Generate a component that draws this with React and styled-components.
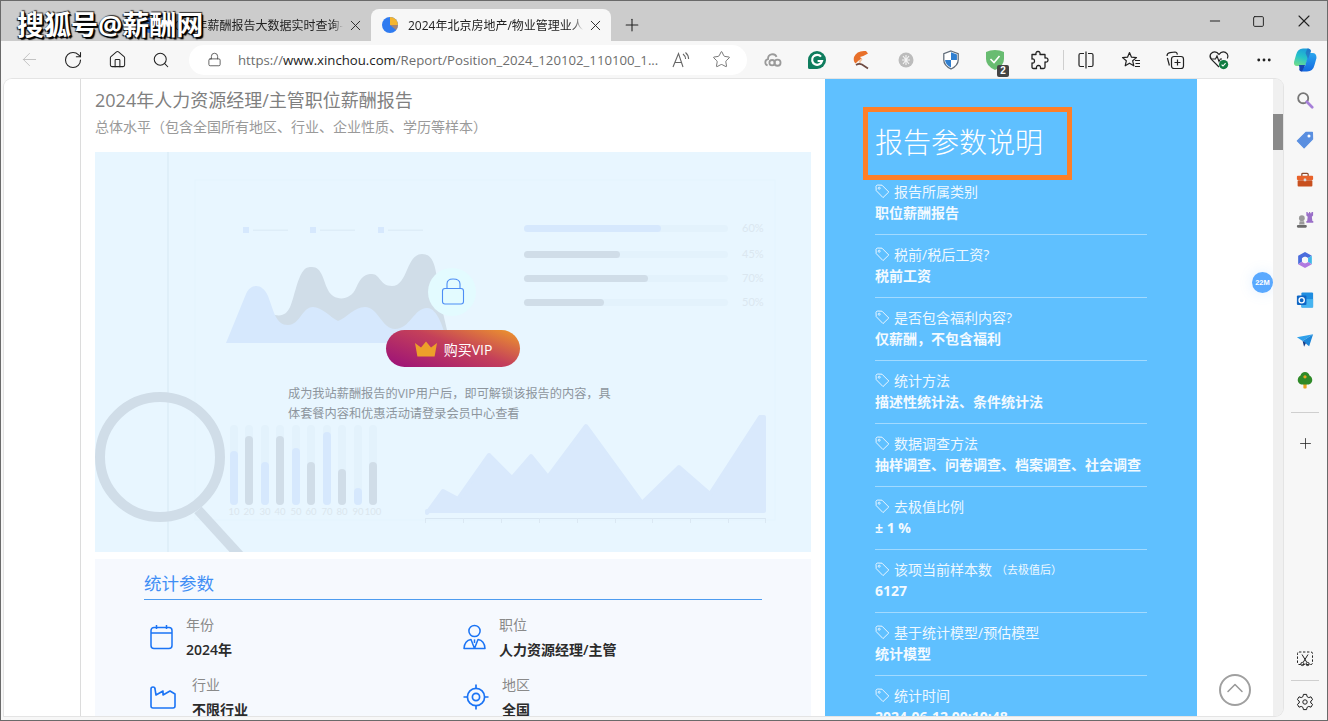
import React from "react";
import styled, { createGlobalStyle } from "styled-components";
import {
  ArrowLeft,
  RotateCw,
  Home,
  Search,
  Lock,
  Star,
  Plus,
  X,
  Minus,
  Square,
  MoreHorizontal,
  ChevronUp,
} from "lucide-react";

const CJK = `"Open Sans", "Noto Sans CJK SC", sans-serif`;

const GlobalStyle = createGlobalStyle`
  html, body {
    margin: 0;
    padding: 0;
    height: 100%;
    overflow: hidden;
    background: #f7f7f7;
    font-family: ${CJK};
  }
`;

const TagIcon = () => (
  <svg width="15" height="15" viewBox="0 0 15 15" fill="none" stroke="#e8f5ff" strokeWidth="1">
    <path d="M1 2.2 L1.2 6.6 L8 13.6 L13.8 8 L7 1.2 L2.2 1 Z" strokeLinejoin="round" />
    <circle cx="4.2" cy="4.2" r="1" />
  </svg>
);

const PieFavicon = () => (
  <svg width="16" height="16" viewBox="0 0 16 16">
    <circle cx="8" cy="8" r="8" fill="#2f7bf0" />
    <path d="M8 0 A8 8 0 0 1 16 8 L8 8 Z" fill="#f5b52e" />
    <path d="M8 8 L16 8 A8 8 0 0 1 14 13 Z" fill="#f08a24" opacity="0.6" />
  </svg>
);

const ReadAloudIcon = () => (
  <svg width="20" height="20" viewBox="0 0 20 20" fill="none" stroke="#666" strokeWidth="1.1">
    <path d="M2 17 L7.500 3.500 L12 17 M4 12.500 H10.500" />
    <path d="M12 4 Q14.500 6 14.600 9 M14.500 2.500 Q17.500 5 17.600 9" />
  </svg>
);

const CloudExt = () => (
  <svg width="18" height="18" viewBox="0 0 20 20" fill="none" stroke="#9a9a9a" strokeWidth="2">
    <path d="M4 16 A3.600 3.600 0 0 1 4.500 9 A5 5 0 0 1 14 6.500" />
    <circle cx="9" cy="13" r="3" />
    <circle cx="15" cy="13" r="3.400" />
  </svg>
);

const GrammarlyExt = () => (
  <svg width="20" height="20" viewBox="0 0 20 20">
    <path d="M10 1 A9 9 0 1 1 10 19 L2.500 19 Q1 19 1 17.500 L1 10 A9 9 0 0 1 10 1 Z" fill="#0f7d5e" />
    <path d="M14 6.600 A5 5 0 1 0 15 11 H10.600" fill="none" stroke="#fff" strokeWidth="2.200" />
  </svg>
);

const FoxExt = () => (
  <svg width="20" height="20" viewBox="0 0 20 20">
    <path d="M14 1 Q5 0 2 7 Q1 11 3.500 13.500 Q6 10 10 9 L8 7 Q12 6 16 3.500 Z" fill="#e8702a" />
    <path d="M10 9 Q7 11 8 13" fill="none" stroke="#f2c7a6" strokeWidth="2" />
    <path d="M4 15 Q7 13 10 14.500 L16 18.500" fill="none" stroke="#6d4a42" strokeWidth="1.700" />
  </svg>
);

const BugExt = () => (
  <svg width="20" height="20" viewBox="0 0 20 20">
    <circle cx="10" cy="10" r="7.500" fill="#bcbcbc" />
    <path d="M7 6 L13 14 M13 6 L7 14 M10 5 V15 M6 10 H14" stroke="#f4f4f4" strokeWidth="1.100" />
  </svg>
);

const ShieldExt = () => (
  <svg width="18" height="20" viewBox="0 0 20 22">
    <path d="M10 1 L18 4 V11 Q18 17 10 21 Q2 17 2 11 V4 Z" fill="#fff" stroke="#5f6b78" strokeWidth="1.400" />
    <path d="M10 2.500 L16.600 5 V11 H10 Z" fill="#2f7fd0" />
    <path d="M10 11 V19.400 Q3.600 16 3.400 11 Z" fill="#2f7fd0" />
  </svg>
);

const AdguardExt = () => (
  <svg width="20" height="22" viewBox="0 0 20 22">
    <path d="M10 1 Q15 1 19 3 V10 Q19 17 10 21 Q1 17 1 10 V3 Q5 1 10 1 Z" fill="#68bc71" />
    <path d="M5.500 10 L9 13.500 L14.500 7" fill="none" stroke="#fff" strokeWidth="1.600" />
  </svg>
);

const PuzzleIcon = () => (
  <svg width="20" height="20" viewBox="0 0 20 20" fill="none" stroke="#222" strokeWidth="1.300">
    <path
      d="M7 4.500 Q6.500 1.500 9 1.500 Q11.500 1.500 11 4.500 H16 V8 Q19 7.500 19 10 Q19 12.500 16 12 V17 Q16 18.500 14.500 18.500 H11.500 Q12 15.500 9.500 15.500 Q7 15.500 7.500 18.500 H4.500 Q3 18.500 3 17 V13 Q5.500 13.500 5.500 11 Q5.500 8.500 3 9 V4.500 Z"
      strokeLinejoin="round"
    />
  </svg>
);

const SplitIcon = () => (
  <svg width="20" height="20" viewBox="0 0 20 20" fill="none" stroke="#222" strokeWidth="1.200">
    <path d="M8 3.500 H4.500 Q3 3.500 3 5 V15 Q3 16.500 4.500 16.500 H8 M12 3.500 H15.500 Q17 3.500 17 5 V15 Q17 16.500 15.500 16.500 H12 M10 1.500 V18.500" />
  </svg>
);

const FavListIcon = () => (
  <svg width="20" height="20" viewBox="0 0 20 20" fill="none" stroke="#222" strokeWidth="1.200">
    <path d="M8.500 2.500 L10.500 7.200 L15.500 7.600 L11.700 10.800 L12.800 15.800 L8.500 13.200 L4.200 15.800 L5.300 10.800 L1.500 7.600 L6.500 7.200 Z" strokeLinejoin="round" />
    <path d="M14 10.500 H19 M14.500 13.500 H19 M14 16.500 H19" />
  </svg>
);

const CollectionsIcon = () => (
  <svg width="20" height="20" viewBox="0 0 20 20" fill="none" stroke="#222" strokeWidth="1.200">
    <path d="M2 6 Q2 3 5 2.600 L10 2 Q12 2 12.400 4.600 M4.400 15.500 L2.400 8" />
    <rect x="6.500" y="6.500" width="12" height="12" rx="2.500" fill="#f7f7f7" />
    <path d="M12.500 9.500 V15.500 M9.500 12.500 H15.500" />
  </svg>
);

const HealthIcon = () => (
  <svg width="22" height="22" viewBox="0 0 22 22" fill="none">
    <path d="M11 18 L3.400 10.400 Q1 7.600 2.800 4.800 Q5.600 1.600 9 3.600 L11 5.400 L13 3.600 Q16.400 1.600 19.200 4.800 Q20.600 7 19.400 9.600" stroke="#222" strokeWidth="1.200" />
    <path d="M3 10 H7.500 L9 7 L11 12.500 L12.400 10 H14" stroke="#222" strokeWidth="1.100" />
    <circle cx="15.600" cy="15.600" r="4.600" fill="#107c41" />
    <path d="M13.600 15.600 L15 17 L17.600 14.200" stroke="#fff" strokeWidth="1.100" />
  </svg>
);

const CopilotIcon = () => (
  <svg width="24" height="24" viewBox="0 0 24 24">
    <defs>
      <linearGradient id="copA" x1="0.6" y1="0" x2="0.3" y2="1">
        <stop offset="0" stopColor="#1c9ddc" />
        <stop offset="0.5" stopColor="#27c4c8" />
        <stop offset="1" stopColor="#6fdc8c" />
      </linearGradient>
      <linearGradient id="copB" x1="0.5" y1="0" x2="0.5" y2="1">
        <stop offset="0" stopColor="#2aa6ee" />
        <stop offset="1" stopColor="#1468e0" />
      </linearGradient>
    </defs>
    <path d="M10 0.500 H15.500 Q17.500 0.500 18 3 L12 18 H4 Q0.500 18 1 14 L3 7 Q4.500 0.500 10 0.500 Z" fill="url(#copA)" />
    <path d="M16 5 H19.500 Q23.500 5 23.500 10 L21.500 17 Q20 23.500 14 23.500 H9.500 Q6 23.500 6.500 20.500 L12 18 Z" fill="url(#copB)" />
    <path d="M14.500 0.500 Q17.500 0.500 18 3 L15 11 L12.500 5 Z" fill="#2457b8" opacity="0.55" />
    <path d="M6 17 H12 L9 23.500 Q6 23.500 6.500 20.500 Z" fill="#1744b0" />
  </svg>
);

const SideSearch = () => (
  <svg viewBox="0 0 20 20" fill="none">
    <circle cx="8" cy="8" r="5.600" stroke="#777" strokeWidth="2" />
    <path d="M12 12 L18 18" stroke="#a67fd8" strokeWidth="3" strokeLinecap="round" />
  </svg>
);

const SideTag = () => (
  <svg viewBox="0 0 20 20">
    <path d="M1.500 11 L11 1.600 L18.200 1.600 L18.400 9 L9 18.600 Z" fill="#5a8fe0" strokeLinejoin="round" stroke="#5a8fe0" strokeWidth="1.400" />
    <circle cx="14.400" cy="5.600" r="1.700" fill="#fff" />
  </svg>
);

const SideToolbox = () => (
  <svg viewBox="0 0 20 20">
    <path d="M6.500 6 V3.600 Q6.500 2.600 7.600 2.600 H12.400 Q13.500 2.600 13.500 3.600 V6" fill="none" stroke="#8c4a2c" strokeWidth="1.400" />
    <rect x="1" y="5.400" width="18" height="4.600" rx="1" fill="#e8622a" />
    <rect x="1.800" y="10.200" width="16.400" height="7" rx="1" fill="#c8501f" />
    <rect x="8.600" y="8.400" width="2.800" height="3" rx="0.600" fill="#d9d9d9" />
  </svg>
);

const SideChess = () => (
  <svg viewBox="0 0 20 20">
    <path d="M11.500 1 H13 V2.400 H14.400 V1 H15.800 V2.400 H17.200 V1 H19 V5 L17.600 6.400 L18.200 11 H19.200 V13 H11.500 V11 H12.400 L13 6.400 L11.500 5 Z" fill="#9a6fc8" />
    <circle cx="6.500" cy="8" r="3.200" fill="#9a9a9a" />
    <path d="M4 11.500 H9 L9.600 15 H3.400 Z" fill="#9a9a9a" />
    <rect x="1" y="15.500" width="11" height="3" rx="1.200" fill="#6c6c6c" />
  </svg>
);

const SideM365 = () => (
  <svg viewBox="0 0 20 20">
    <path d="M10 1 L17.600 5.400 L13.400 7.800 L10 6 L6.600 8 V12 L2.400 14.600 V5.400 Z" fill="#4a6cdc" />
    <path d="M17.600 5.400 V14.600 L13.400 12.200 V7.800 Z" fill="#3fb8e8" />
    <path d="M2.400 14.600 L6.600 12 L10 14 L13.400 12.200 L17.600 14.600 L10 19 Z" fill="#b07ae0" />
    <circle cx="10" cy="10" r="3.400" fill="#f7f7f7" />
  </svg>
);

const SideOutlook = () => (
  <svg viewBox="0 0 20 20">
    <rect x="6" y="1.600" width="13" height="16.800" rx="1.200" fill="#1f8de0" />
    <path d="M6 9 L19 9 V18.400 H6 Z" fill="#47b4f0" />
    <rect x="1" y="5" width="10.600" height="10.600" rx="1.200" fill="#0f66c4" />
    <circle cx="6.300" cy="10.300" r="2.900" fill="none" stroke="#fff" strokeWidth="1.500" />
  </svg>
);

const SideSend = () => (
  <svg viewBox="0 0 20 20">
    <path d="M1 7 L19 3.600 L7.400 11 Z" fill="#2fa0ea" />
    <path d="M19 3.600 L14.600 17 L7.400 11 Z" fill="#1d86d8" />
    <path d="M7.400 11 L9 17.600 L11 13.400 Z" fill="#123a86" />
  </svg>
);

const SideTree = () => (
  <svg viewBox="0 0 20 20">
    <rect x="8.200" y="14" width="3.600" height="5.400" rx="0.800" fill="#e8a424" />
    <path d="M10 1 Q14 1 15 5 Q18.500 7 18 11 Q17 15 12 15 H8 Q3 15 2 11 Q1.500 7 5 5 Q6 1 10 1 Z" fill="#2f8a28" />
    <circle cx="10" cy="6.400" r="1.800" fill="#e8a424" />
  </svg>
);

const SideCapture = () => (
  <svg width="18" height="18" viewBox="0 0 18 18" fill="none" stroke="#222" strokeWidth="1">
    <rect x="1.500" y="2" width="15" height="12.500" rx="1.500" strokeDasharray="2.400 1.600" />
    <path d="M6 4.500 L10.600 12 M12 4.500 L7.400 12" />
    <circle cx="6.400" cy="14" r="1.600" />
    <circle cx="11.600" cy="14" r="1.600" />
  </svg>
);

const SideGear = () => (
  <svg width="18" height="18" viewBox="0 0 18 18" fill="none" stroke="#222" strokeWidth="1">
    <path d="M7.400 1.400 H10.600 L11 3.600 L12.800 4.600 L15 3.800 L16.600 6.600 L14.800 8 V10 L16.600 11.400 L15 14.200 L12.800 13.400 L11 14.400 L10.600 16.600 H7.400 L7 14.400 L5.200 13.400 L3 14.200 L1.400 11.400 L3.200 10 V8 L1.400 6.600 L3 3.800 L5.200 4.600 L7 3.600 Z" strokeLinejoin="round" />
    <circle cx="9" cy="9" r="2.200" />
  </svg>
);

const CalendarIcon = () => (
  <svg width="23" height="26" viewBox="0 0 23 26" fill="none" stroke="#1b74f5" strokeWidth="1.500">
    <rect x="1" y="3.500" width="21" height="21" rx="3" />
    <path d="M1 9 H22 M6.500 1 V5 M16.500 1 V5" />
  </svg>
);

const PersonIcon = () => (
  <svg width="23" height="26" viewBox="0 0 23 26" fill="none" stroke="#1b74f5" strokeWidth="1.500">
    <circle cx="11.500" cy="7" r="5.600" />
    <path d="M1 24.500 Q1.600 16.600 8 15.600 L11.500 24.500 L15 15.600 Q21.400 16.600 22 24.500 Z" strokeLinejoin="round" />
    <path d="M11.500 15.400 V19" />
  </svg>
);

const FactoryIcon = () => (
  <svg width="26" height="23" viewBox="0 0 26 23" fill="none" stroke="#1b74f5" strokeWidth="1.600">
    <path d="M1 3 Q1 1 3 1 Q5 1 5 3 L6 9 L13 5 V9 L20 5 L25 8 V20 Q25 22 23 22 H3 Q1 22 1 20 Z" strokeLinejoin="round" />
  </svg>
);

const TargetIcon = () => (
  <svg width="26" height="26" viewBox="0 0 26 26" fill="none" stroke="#1b74f5" strokeWidth="1.700">
    <circle cx="13" cy="13" r="8.600" />
    <circle cx="13" cy="13" r="3.600" />
    <path d="M13 0.500 V4.400 M13 21.600 V25.500 M0.500 13 H4.400 M21.600 13 H25.500" />
  </svg>
);

const CrownIcon = () => (
  <svg width="24" height="16" viewBox="0 0 24 16">
    <path d="M1 2 L7 6.400 L12 0.400 L17 6.400 L23 2 L20.600 15.600 H3.400 Z" fill="#eda02a" strokeLinejoin="round" />
  </svg>
);

const legendX = [243, 310, 378];
const progressBars = [
  { y: 225, end: 661, color: "#d6e8fd", label: "60%" },
  { y: 251, end: 620, color: "#d0dde8", label: "45%" },
  { y: 275, end: 648, color: "#d0dde8", label: "70%" },
  { y: 299, end: 604, color: "#d0dde8", label: "50%" },
];
const columnBars = [
  [234, 451, "#d6e8fd", 10],
  [249, 436, "#d0dde8", 20],
  [265, 462, "#d6e8fd", 30],
  [280, 436, "#d0dde8", 40],
  [296, 448, "#d6e8fd", 50],
  [311, 462, "#d0dde8", 60],
  [327, 432, "#d6e8fd", 70],
  [342, 469, "#d0dde8", 80],
  [358, 488, "#d6e8fd", 90],
  [373, 462, "#d0dde8", 100],
];
const axisTicks = [425, 463, 501, 539, 577, 615, 652, 690, 728, 765];

const Illustration = () => (
  <ChartArt viewBox="95 152 716 400">
    <rect x="167" y="152" width="2" height="400" fill="#dfeff9" />
    <rect x="195" y="180" width="580" height="340" fill="none" stroke="#e4f4fe" />
    {legendX.map((x) => (
      <g key={x}>
        <rect x={x} y="227" width="6" height="6" fill="#d6e8fd" />
        <rect x={x + 10} y="229.500" width="35" height="1.500" fill="#deedf8" />
      </g>
    ))}
    {progressBars.map((b) => (
      <g key={b.y}>
        <rect x="524" y={b.y} width="204" height="7" rx="3.500" fill="#e3f2fc" />
        <rect x="524" y={b.y} width={b.end - 524} height="7" rx="3.500" fill={b.color} />
        <text x="742" y={b.y + 7} fontSize="11" fill="#dbe7f0" fontFamily="Lato, sans-serif">{b.label}</text>
      </g>
    ))}
    <path
      d="M275 315 C290 318 291 304 296 288 C302 268 306 267 312 267 C322 267 323 280 328 290 C333 301 350 302 356 288 C361 276 366 274 372 274 C380 274 380 286 392 286 C408 286 406 254 422 254 C436 254 436 272 440 300 L450 343 H275 Z"
      fill="#d0dde8"
    />
    <path
      d="M226 343 L246 294 C250 284 262 282 268 296 C274 312 276 325 288 325 C300 325 302 307 313 307 C322 307 330 317 338 321 C348 317 354 307 365 307 C378 307 382 329 395 329 C410 329 414 308 427 308 C438 308 444 330 447 343 Z"
      fill="#d6e8fd"
    />
    <circle cx="452" cy="292" r="24" fill="#e3fbff" />
    <g fill="none" stroke="#4d8df5" strokeWidth="1.100">
      <rect x="442.500" y="288.500" width="21" height="15.500" rx="2.500" />
      <path d="M447 288 V284 Q447 279 453 279 Q460 279 460 284 V288" />
    </g>
    <circle cx="160" cy="457" r="60" fill="none" stroke="#d0dde8" strokeWidth="10" />
    <path d="M198 510 L240 556" stroke="#d0dde8" strokeWidth="10" />
    {columnBars.map(([x, top, color, label]) => (
      <g key={label}>
        <rect x={x - 4} y="425" width="8" height="80" rx="4" fill="#e3f2fc" />
        <rect x={x - 4} y={top} width="8" height={505 - top} rx="4" fill={color} />
        <text x={x} y="515" fontSize="9.500" textAnchor="middle" fill="#dbe6ee" fontFamily="Lato, sans-serif">{label}</text>
      </g>
    ))}
    <path
      d="M427 513 L443 491 L458 499 L489 455 L512 478 L531 456 L548 477 L586 426 L642 503 L679 467 L710 494 L760 417 L764 417 L764 511 L427 511 Z"
      fill="#d9e9fc"
      stroke="#d9e9fc"
      strokeWidth="4"
      strokeLinejoin="round"
    />
    <rect x="425" y="518" width="340" height="1" fill="#d8e6f2" />
    {axisTicks.map((x) => (
      <rect key={x} x={x} y="518" width="1" height="5" fill="#dbe8f3" />
    ))}
  </ChartArt>
);

const subtitleText =
  "\u603b\u4f53\u6c34\u5e73\uff08\u5305\u542b\u5168\u56fd\u6240\u6709\u5730\u533a\u3001\u884c\u4e1a\u3001\u4f01\u4e1a\u6027\u8d28\u3001\u5b66\u5386\u7b49\u6837\u672c\uff09";
const lockedText =
  "\u6210\u4e3a\u6211\u7ad9\u85aa\u916c\u62a5\u544a\u7684VIP\u7528\u6237\u540e\uff0c\u5373\u53ef\u89e3\u9501\u8be5\u62a5\u544a\u7684\u5185\u5bb9\uff0c\u5177\u4f53\u5957\u9910\u5185\u5bb9\u548c\u4f18\u60e0\u6d3b\u52a8\u8bf7\u767b\u5f55\u4f1a\u5458\u4e2d\u5fc3\u67e5\u770b";

const reportItems = [
  { label: "报告所属类别", value: "职位薪酬报告" },
  { label: "税前/税后工资?", value: "税前工资" },
  { label: "是否包含福利内容?", value: "\u4ec5\u85aa\u916c\uff0c\u4e0d\u5305\u542b\u798f\u5229" },
  { label: "统计方法", value: "描述性统计法、条件统计法" },
  { label: "数据调查方法", value: "抽样调查、问卷调查、档案调查、社会调查" },
  { label: "去极值比例", value: "± 1 %" },
  { label: "该项当前样本数", note: "\uff08\u53bb\u6781\u503c\u540e\uff09", value: "6127" },
  { label: "基于统计模型/预估模型", value: "统计模型" },
  { label: "统计时间", value: "2024-06-12 00:10:48" },
];

const extensions = [
  <CloudExt key="cloud" />,
  <GrammarlyExt key="grammarly" />,
  <FoxExt key="fox" />,
  <BugExt key="bug" />,
  <ShieldExt key="shield" />,
];

const sideIcons = [
  <SideSearch key="search" />,
  <SideTag key="tag" />,
  <SideToolbox key="toolbox" />,
  <SideChess key="chess" />,
  <SideM365 key="m365" />,
  <SideOutlook key="outlook" />,
  <SideSend key="send" />,
  <SideTree key="tree" />,
];

const App = () => {
  return (
    <>
      <GlobalStyle />
      <Frame>
        <TabStrip>
          <Watermark>搜狐号@薪酬网</Watermark>
          <Tab>
            <PieFavicon />
            <TabTitle>2024年薪酬报告大数据实时查询-</TabTitle>
            <X size={17} strokeWidth={1.300} color="#222" />
          </Tab>
          <Tab $active>
            <PieFavicon />
            <TabTitle>2024年北京房地产/物业管理业人力资源</TabTitle>
            <X size={17} strokeWidth={1.300} color="#222" />
          </Tab>
          <NewTab>
            <Plus size={20} strokeWidth={1.300} color="#222" />
          </NewTab>
          <WindowControls>
            <Minus size={16} strokeWidth={1.500} color="#222" />
            <Square size={13} strokeWidth={1.800} color="#222" />
            <X size={20} strokeWidth={1.300} color="#222" />
          </WindowControls>
        </TabStrip>

        <Toolbar>
          <NavButton><ArrowLeft size={21} strokeWidth={1} color="#bbb" /></NavButton>
          <NavButton><RotateCw size={20} strokeWidth={1.300} color="#222" /></NavButton>
          <NavButton><Home size={19} strokeWidth={1.300} color="#222" /></NavButton>
          <NavButton><Search size={18} strokeWidth={1.400} color="#222" /></NavButton>
          <AddressBar>
            <Lock size={15} strokeWidth={1.300} color="#444" />
            <UrlText>
              https://<b>www.xinchou.com</b>/Report/Position_2024_120102_110100_1...
            </UrlText>
            <ReadAloudIcon />
            <AddressStar>
              <Star size={19} strokeWidth={1} color="#555" />
            </AddressStar>
          </AddressBar>
          <ExtensionRow>
            {extensions.map((icon) => (
              <NavButton key={icon.key}>{icon}</NavButton>
            ))}
            <NavButton>
              <AdguardExt />
              <CountBadge>2</CountBadge>
            </NavButton>
            <NavButton><PuzzleIcon /></NavButton>
            <ToolDivider />
            <NavButton><SplitIcon /></NavButton>
            <NavButton><FavListIcon /></NavButton>
            <NavButton><CollectionsIcon /></NavButton>
            <NavButton><HealthIcon /></NavButton>
            <NavButton><MoreHorizontal size={18} strokeWidth={1.800} color="#222" /></NavButton>
            <CopilotSlot><CopilotIcon /></CopilotSlot>
          </ExtensionRow>
        </Toolbar>

        <Body>
          <Viewport>
            <Page>
              <MainColumn>
                <ReportTitle>2024年人力资源经理/主管职位薪酬报告</ReportTitle>
                <ReportSub>{subtitleText}</ReportSub>
                <LockedCard>
                  <Illustration />
                  <BuyButton>
                    <CrownIcon />
                    购买VIP
                  </BuyButton>
                  <LockedText>{lockedText}</LockedText>
                </LockedCard>
                <ParamsCard>
                  <ParamsTitle>统计参数</ParamsTitle>
                  <ParamsGrid>
                    <ParamCell $gap={13}>
                      <CalendarIcon />
                      <ParamText>
                        <ParamLabel>年份</ParamLabel>
                        <ParamValue>2024年</ParamValue>
                      </ParamText>
                    </ParamCell>
                    <ParamCell $gap={13}>
                      <PersonIcon />
                      <ParamText>
                        <ParamLabel>职位</ParamLabel>
                        <ParamValue>人力资源经理/主管</ParamValue>
                      </ParamText>
                    </ParamCell>
                    <ParamCell $gap={16}>
                      <FactoryIcon />
                      <ParamText>
                        <ParamLabel>行业</ParamLabel>
                        <ParamValue>不限行业</ParamValue>
                      </ParamText>
                    </ParamCell>
                    <ParamCell $gap={13}>
                      <TargetIcon />
                      <ParamText>
                        <ParamLabel>地区</ParamLabel>
                        <ParamValue>全国</ParamValue>
                      </ParamText>
                    </ParamCell>
                  </ParamsGrid>
                </ParamsCard>
              </MainColumn>

              <InfoPanel>
                <PanelTitle>报告参数说明</PanelTitle>
                <InfoList>
                  {reportItems.map((item) => (
                    <InfoItem key={item.label}>
                      <InfoLabel>
                        <TagIcon />
                        {item.label}
                        {item.note && <InfoNote>{item.note}</InfoNote>}
                      </InfoLabel>
                      <InfoValue>{item.value}</InfoValue>
                    </InfoItem>
                  ))}
                </InfoList>
              </InfoPanel>

              <PageEdge>
                <SpeedBadge>22M</SpeedBadge>
                <BackToTop>
                  <ChevronUp size={28} strokeWidth={1.300} color="#999" />
                </BackToTop>
              </PageEdge>
            </Page>
            <Scrollbar>
              <ScrollThumb />
            </Scrollbar>
          </Viewport>

          <Sidebar>
            {sideIcons.map((icon) => (
              <SideButton key={icon.key}>{icon}</SideButton>
            ))}
            <SideDivider />
            <SideButton><Plus size={17} strokeWidth={1.100} color="#222" /></SideButton>
            <SideSpacer />
            <SideFoot><SideCapture /></SideFoot>
            <SideDivider $tight />
            <SideFoot><SideGear /></SideFoot>
          </Sidebar>
        </Body>
      </Frame>
    </>
  );
};

const Frame = styled.div`
  width: 1328px;
  height: 721px;
  box-sizing: border-box;
  border: 1px solid #6a6a6a;
  display: flex;
  flex-direction: column;
  overflow: hidden;
  background: #f7f7f7;
`;

const TabStrip = styled.div`
  height: 40px;
  flex: none;
  background: #cccccc;
  display: flex;
  align-items: flex-end;
  padding-left: 130px;
  position: relative;
`;

const Watermark = styled.div`
  position: absolute;
  left: 16px;
  top: 7px;
  z-index: 3;
  font-size: 27px;
  font-weight: 700;
  line-height: 34px;
  color: #fff;
  white-space: nowrap;
  text-shadow: 1px 1px 0 #000, 2px 2px 1px #000, -1px 1px 1px #222, 1px -1px 1px #333;
`;

const Tab = styled.div`
  width: 240px;
  height: 32px;
  box-sizing: border-box;
  padding: 0 7px 0 11px;
  display: flex;
  align-items: center;
  gap: 10px;
  border-radius: 8px 8px 0 0;
  background: ${(p) => (p.$active ? "#f7f7f7" : "transparent")};
  svg {
    flex: none;
  }
  svg:last-child {
    margin-left: -6px;
  }
`;

const TabTitle = styled.div`
  flex: 1;
  min-width: 0;
  font-size: 12px;
  color: #222;
  white-space: nowrap;
  overflow: hidden;
  mask-image: linear-gradient(90deg, #000 calc(100% - 10px), transparent);
`;

const NewTab = styled.div`
  width: 42px;
  height: 32px;
  display: flex;
  align-items: center;
  justify-content: center;
`;

const WindowControls = styled.div`
  position: absolute;
  right: 0;
  top: 0;
  height: 40px;
  width: 133px;
  display: flex;
  align-items: center;
  justify-content: space-between;
  padding: 0 13px;
  box-sizing: border-box;
`;

const Toolbar = styled.div`
  height: 37px;
  flex: none;
  background: #f7f7f7;
  display: flex;
  align-items: center;
  padding-left: 6px;
`;

const NavButton = styled.div`
  width: 44px;
  height: 30px;
  flex: none;
  display: flex;
  align-items: center;
  justify-content: center;
  position: relative;
`;

const AddressBar = styled.div`
  width: 558px;
  height: 30px;
  margin-left: 6px;
  flex: none;
  box-sizing: border-box;
  background: #fff;
  border-radius: 15px;
  display: flex;
  align-items: center;
  padding: 0 16px 0 18px;
`;

const UrlText = styled.div`
  width: 425px;
  flex: none;
  margin: 0 8px 0 16px;
  font-size: 13.200px;
  color: #6d6d6d;
  white-space: nowrap;
  overflow: hidden;
  b {
    font-weight: 400;
    color: #1c1c1c;
  }
`;

const AddressStar = styled.div`
  margin-left: auto;
  display: flex;
`;

const ExtensionRow = styled.div`
  margin-left: 4px;
  display: flex;
  align-items: center;
  gap: 0.400px;
`;

const CountBadge = styled.span`
  position: absolute;
  right: 8px;
  bottom: -2px;
  width: 12px;
  height: 12px;
  border-radius: 2px;
  background: #444;
  color: #fff;
  font-family: "Liberation Sans", sans-serif;
  font-size: 10px;
  font-weight: 700;
  line-height: 12px;
  text-align: center;
`;

const ToolDivider = styled.div`
  width: 1px;
  height: 20px;
  background: #cfcfcf;
  margin-left: 1px;
  flex: none;
`;

const CopilotSlot = styled.div`
  width: 38px;
  height: 30px;
  flex: none;
  display: flex;
  align-items: center;
  justify-content: center;
`;

const Body = styled.div`
  flex: 1;
  min-height: 0;
  display: flex;
`;

const Viewport = styled.div`
  width: 1279px;
  margin: 1px 0 4px 3px;
  flex: none;
  display: flex;
  overflow: hidden;
  border-radius: 8px 8px 8px 0;
  box-shadow: 0 0 0 1px #e4e4e4;
`;

const Page = styled.div`
  width: 1269px;
  flex: none;
  display: flex;
  background: #fff;
  overflow: hidden;
`;

const MainColumn = styled.div`
  width: 745px;
  margin-left: 76px;
  flex: none;
  box-sizing: border-box;
  border-left: 1px solid #dcdcdc;
  padding: 0 14px;
`;

const ReportTitle = styled.h1`
  margin: 9px 0 0;
  font-size: 18px;
  font-weight: 400;
  line-height: 25px;
  color: #808080;
  white-space: nowrap;
`;

const ReportSub = styled.div`
  margin-top: 4px;
  font-size: 14px;
  line-height: 20px;
  color: #9a9a9a;
  white-space: nowrap;
`;

const LockedCard = styled.div`
  margin-top: 15px;
  height: 400px;
  background: #e8f6ff;
  position: relative;
  overflow: hidden;
`;

const ChartArt = styled.svg`
  display: block;
  width: 716px;
  height: 400px;
`;

const BuyButton = styled.div`
  position: absolute;
  left: 291px;
  top: 178px;
  width: 134px;
  height: 37px;
  border-radius: 19px;
  display: flex;
  align-items: center;
  justify-content: center;
  gap: 6px;
  font-size: 14px;
  color: #fff;
  background: linear-gradient(20deg, #9a0f7a 0%, #c4405a 55%, #ef9a2a 100%);
`;

const LockedText = styled.p`
  position: absolute;
  left: 193px;
  top: 232px;
  width: 330px;
  margin: 0;
  font-size: 12.200px;
  line-height: 20px;
  color: #8d959d;
`;

const ParamsCard = styled.div`
  margin-top: 7px;
  height: 300px;
  box-sizing: border-box;
  background: #f6f9fe;
  padding: 10px 49px 0;
`;

const ParamsTitle = styled.div`
  font-size: 17.500px;
  line-height: 28px;
  color: #3f8ef5;
  border-bottom: 1px solid #4d9cf0;
  padding-bottom: 2px;
`;

const ParamsGrid = styled.div`
  display: grid;
  grid-template-columns: 313px 1fr;
  grid-auto-rows: 60px;
  margin-top: 12px;
  padding-left: 6px;
`;

const ParamCell = styled.div`
  display: flex;
  align-items: center;
  gap: ${(p) => p.$gap}px;
  height: 50px;
`;

const ParamText = styled.div`
  display: flex;
  flex-direction: column;
  gap: 4px;
`;

const ParamLabel = styled.div`
  font-size: 14px;
  line-height: 21px;
  color: #8a8a8a;
`;

const ParamValue = styled.div`
  font-size: 14px;
  font-weight: 600;
  line-height: 21px;
  color: #2b2b2b;
`;

const InfoPanel = styled.aside`
  width: 372px;
  flex: none;
  box-sizing: border-box;
  background: #5fc0ff;
  padding: 28px 50px 0 38px;
  overflow: hidden;
`;

const PanelTitle = styled.h2`
  box-sizing: border-box;
  width: 209px;
  height: 73px;
  margin: 0;
  border: 5px solid #ff7f27;
  padding-left: 7px;
  font-size: 28px;
  font-weight: 300;
  line-height: 60px;
  color: #fff;
  white-space: nowrap;
`;

const InfoList = styled.div`
  margin-top: 1px;
  padding-left: 12px;
`;

const InfoItem = styled.div`
  border-bottom: 1px solid rgba(255, 255, 255, 0.42);
  padding-bottom: 11px;
  margin-bottom: 9px;
`;

const InfoLabel = styled.div`
  display: flex;
  align-items: center;
  gap: 4px;
  font-size: 14px;
  line-height: 21px;
  color: #eef8ff;
  white-space: nowrap;
`;

const InfoNote = styled.span`
  font-size: 11px;
`;

const InfoValue = styled.div`
  font-size: 14px;
  font-weight: 700;
  line-height: 21px;
  color: #f3faff;
  white-space: nowrap;
`;

const PageEdge = styled.div`
  flex: 1;
  position: relative;
`;

const SpeedBadge = styled.div`
  position: absolute;
  right: 0;
  top: 193px;
  width: 21px;
  height: 21px;
  border-radius: 50%;
  background: #5aa9ff;
  box-shadow: 0 0 14px rgba(90, 169, 255, 0.18);
  color: #fff;
  font-family: "Liberation Sans", sans-serif;
  font-size: 7.500px;
  font-weight: 700;
  line-height: 21px;
  text-align: center;
`;

const BackToTop = styled.div`
  position: absolute;
  left: 22px;
  top: 595px;
  width: 32px;
  height: 32px;
  box-sizing: border-box;
  border: 2px solid #a0a0a0;
  border-radius: 50%;
  display: flex;
  align-items: center;
  justify-content: center;
  padding-bottom: 4px;
`;

const Scrollbar = styled.div`
  width: 10px;
  flex: none;
  background: #f0f0f0;
  padding-top: 35px;
`;

const ScrollThumb = styled.div`
  height: 36px;
  background: #8a8a8a;
`;

const Sidebar = styled.div`
  flex: 1;
  display: flex;
  flex-direction: column;
  align-items: center;
  padding-top: 2px;
`;

const SideButton = styled.div`
  width: 40px;
  height: 40px;
  flex: none;
  display: flex;
  align-items: center;
  justify-content: center;
  > svg:not([width]) {
    width: 18px;
    height: 18px;
  }
`;

const SideDivider = styled.div`
  width: 28px;
  height: 1px;
  flex: none;
  background: #cfcfcf;
  margin: ${(p) => (p.$tight ? "3px 0" : "12px 0 10px")};
`;

const SideSpacer = styled.div`
  flex: 1;
`;

const SideFoot = styled.div`
  width: 40px;
  height: 36px;
  flex: none;
  display: flex;
  align-items: center;
  justify-content: center;
`;

export default App;
